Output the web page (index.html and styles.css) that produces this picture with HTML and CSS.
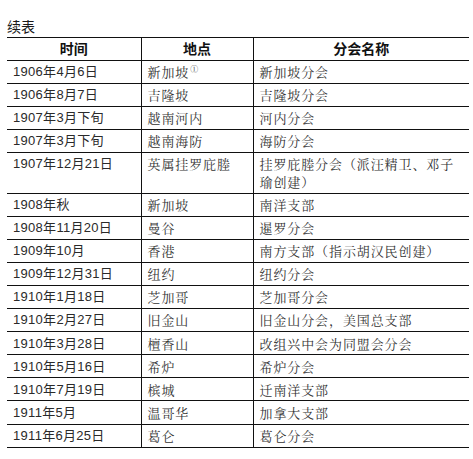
FILE: index.html
```html
<!DOCTYPE html>
<html lang="zh-CN">
<head>
<meta charset="utf-8">
<title>续表</title>
<link rel="stylesheet" href="styles.css">
</head>
<body>
<div class="page">
  <div class="caption">续表</div>
  <table class="tbl">
    <colgroup>
      <col class="c1"><col class="c2"><col class="c3">
    </colgroup>
    <thead>
      <tr><th>时间</th><th>地点</th><th>分会名称</th></tr>
    </thead>
    <tbody>
      <tr><td class="d">1906年4月6日</td><td>新加坡<sup class="note">①</sup></td><td>新加坡分会</td></tr>
      <tr><td class="d">1906年8月7日</td><td>吉隆坡</td><td>吉隆坡分会</td></tr>
      <tr><td class="d">1907年3月下旬</td><td>越南河内</td><td>河内分会</td></tr>
      <tr><td class="d">1907年3月下旬</td><td>越南海防</td><td>海防分会</td></tr>
      <tr><td class="d">1907年12月21日</td><td>英属挂罗庇塍</td><td>挂罗庇塍分会（派汪精卫、邓子<br>瑜创建）</td></tr>
      <tr><td class="d">1908年秋</td><td>新加坡</td><td>南洋支部</td></tr>
      <tr><td class="d">1908年11月20日</td><td>曼谷</td><td>暹罗分会</td></tr>
      <tr><td class="d">1909年10月</td><td>香港</td><td>南方支部（指示胡汉民创建）</td></tr>
      <tr><td class="d">1909年12月31日</td><td>纽约</td><td>纽约分会</td></tr>
      <tr><td class="d">1910年1月18日</td><td>芝加哥</td><td>芝加哥分会</td></tr>
      <tr><td class="d">1910年2月27日</td><td>旧金山</td><td>旧金山分会，美国总支部</td></tr>
      <tr><td class="d">1910年3月28日</td><td>檀香山</td><td>改组兴中会为同盟会分会</td></tr>
      <tr><td class="d">1910年5月16日</td><td>希炉</td><td>希炉分会</td></tr>
      <tr><td class="d">1910年7月19日</td><td>槟城</td><td>迁南洋支部</td></tr>
      <tr><td class="d">1911年5月</td><td>温哥华</td><td>加拿大支部</td></tr>
      <tr><td class="d">1911年6月25日</td><td>葛仑</td><td>葛仑分会</td></tr>
    </tbody>
  </table>
</div>
</body>
</html>
```

FILE: styles.css
```css
html, body {
  margin: 0;
  padding: 0;
  background: #ffffff;
}

.page {
  padding: 17px 4px 0 7px;
  font-family: "Noto Sans CJK SC", sans-serif;
  color: #222222;
}

.caption {
  font-size: 14px;
  line-height: 18px;
  color: #1a1a1a;
  margin-bottom: 2px;
}

.tbl {
  border-collapse: collapse;
  width: 462px;
  table-layout: fixed;
}

.c1 { width: 134px; }
.c2 { width: 112px; }
.c3 { width: 216px; }

.tbl th,
.tbl td {
  border-top: 1px solid #111111;
  border-bottom: 1px solid #111111;
  padding: 2.4px 4px 2.3px 6px;
  line-height: 17.4px;
  vertical-align: top;
  text-align: left;
}

.tbl th + th,
.tbl td + td {
  border-left: 1px solid #111111;
}

.tbl th {
  font-size: 14px;
  font-weight: 700;
  text-align: center;
  color: #111111;
  padding: 2.2px 4px 2.1px 4px;
}

.tbl td {
  font-family: "Noto Serif CJK SC", "Noto Sans CJK SC", sans-serif;
  font-size: 13px;
  font-weight: 400;
  letter-spacing: 0.9px;
  color: #333333;
  white-space: nowrap;
}

.tbl td.d {
  font-family: "Liberation Sans", "Noto Sans CJK SC", sans-serif;
  font-weight: 400;
  letter-spacing: 0.3px;
  color: #2a2a2a;
}

.note {
  font-size: 8px;
  line-height: 0;
  vertical-align: 5px;
  letter-spacing: 0;
  margin-left: 1px;
}
```
